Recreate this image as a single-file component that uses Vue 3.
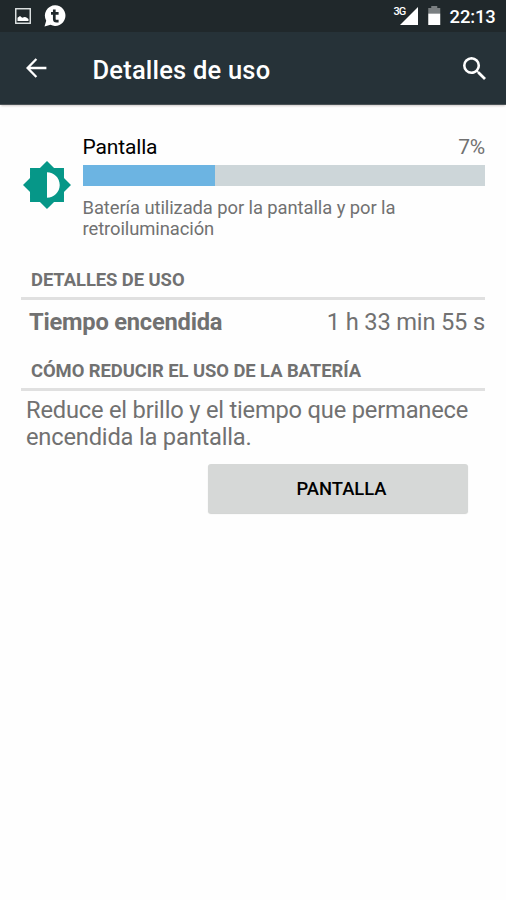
<script setup>
const usage = {
  name: 'Pantalla',
  percent: '7%',
  fill: 33,
  description: 'Batería utilizada por la pantalla y por la retroiluminación',
}
</script>

<template>
  <div class="screen">
    <div class="status">
      <div class="group">
        <svg class="picture" viewBox="0 0 16 16">
          <rect x="0.75" y="0.75" width="14.5" height="14.5" fill="none" stroke="#e4e8e9" stroke-width="1.4" />
          <path d="M2.5 13V9.8L5 8l2.2 1.8L9.5 9l1.5.3L13.5 11v2z" fill="#fff" />
        </svg>
        <svg class="chat" viewBox="0 0 22 22">
          <path d="M11.2.3a10.3 10.3 0 1 1-4.7 19.5L.5 21.6l1.7-5.9A10.3 10.3 0 0 1 11.2.3z" fill="#fff" />
          <path d="M10.3 4.4v9.6q0 2.2 2.2 2.2h2.1M7 8.4h7.6" fill="none" stroke="#20292c" stroke-width="2.7" />
        </svg>
      </div>
      <div class="group">
        <span class="network">3G</span>
        <svg class="signal" viewBox="0 0 18 18"><path d="M18 0v18H0z" fill="#fff" /></svg>
        <svg class="battery" viewBox="0 0 12 19">
          <path d="M3 0h6v2h3v5.5H0V2h3z" fill="#7a7f81" />
          <path d="M0 7.5h12V19H0z" fill="#fff" />
        </svg>
        <span class="clock">22:13</span>
      </div>
    </div>

    <header class="bar">
      <svg class="back" viewBox="0 0 21 20">
        <path d="M20.4 10H1.8M10.4 1L1.6 10l8.8 9" fill="none" stroke="#fff" stroke-width="2.3" />
      </svg>
      <h1>Detalles de uso</h1>
      <svg class="search" viewBox="3 3 17.5 17.5">
        <path d="M15.5 14h-.79l-.28-.27A6.47 6.47 0 0 0 16 9.5 6.5 6.5 0 1 0 9.5 16c1.61 0 3.09-.59 4.23-1.57l.27.28v.79l5 4.99L20.49 19l-4.99-5zm-6 0C7.01 14 5 11.99 5 9.5S7.01 5 9.5 5 14 7.01 14 9.5 11.99 14 9.5 14z" fill="#fff" />
      </svg>
    </header>

    <main>
      <section class="summary">
        <svg class="brightness" viewBox="0.69 0.69 22.62 22.62">
          <path d="M20 15.31L23.31 12 20 8.69V4h-4.69L12 .69 8.69 4H4v4.69L.69 12 4 15.31V20h4.69L12 23.31 15.31 20H20v-4.69zM12 18V6c3.31 0 6 2.69 6 6s-2.69 6-6 6z" fill="#069788" />
        </svg>
        <div class="info">
          <div class="heading">
            <span class="name">{{ usage.name }}</span>
            <span class="percent">{{ usage.percent }}</span>
          </div>
          <div class="track"><div class="fill" :style="{ width: usage.fill + '%' }"></div></div>
          <p class="description">{{ usage.description }}</p>
        </div>
      </section>

      <h2>DETALLES DE USO</h2>
      <div class="row">
        <span class="label">Tiempo encendida</span>
        <span class="value">1 h 33 min 55 s</span>
      </div>

      <h2>CÓMO REDUCIR EL USO DE LA BATERÍA</h2>
      <p class="tip">Reduce el brillo y el tiempo que permanece encendida la pantalla.</p>
      <button type="button">PANTALLA</button>
    </main>
  </div>
</template>

<style>
body {
  background: #fefefe;
}
</style>

<style scoped>
.screen {
  box-sizing: border-box;
  width: 506px;
  height: 900px;
  overflow: hidden;
  background: #fefefe;
  color: #717171;
  font-family: Roboto, sans-serif;
}
h1,
h2,
p {
  margin: 0;
}
svg {
  display: block;
  flex: none;
}
.status {
  display: flex;
  justify-content: space-between;
  box-sizing: border-box;
  height: 32px;
  padding: 0 10.5px 0 15px;
  background: #20282b;
  color: #fff;
}
.group {
  display: flex;
  align-items: flex-start;
}
.picture {
  width: 16px;
  height: 16px;
  margin-top: 8px;
}
.chat {
  width: 22px;
  height: 22px;
  margin: 5px 0 0 12.5px;
}
.network {
  margin: 5px -6px 0 0;
  font-size: 11px;
  line-height: 13px;
  font-weight: 500;
  letter-spacing: -0.8px;
}
.signal {
  width: 18px;
  height: 18px;
  margin-top: 7px;
}
.battery {
  width: 12.5px;
  height: 19px;
  margin: 6px 9px 0 10.5px;
}
.clock {
  margin-top: 6px;
  font-size: 18.4px;
  line-height: 22px;
  font-weight: 500;
  letter-spacing: -0.15px;
}
.bar {
  display: flex;
  align-items: flex-start;
  box-sizing: border-box;
  height: 72px;
  padding: 0 20px 0 26px;
  background: #263238;
  color: #fff;
  box-shadow: 0 1px 0 #4a5256, 0 3px 2px -1px #cfc9c9;
}
.back {
  width: 21px;
  height: 20px;
  margin-top: 26px;
}
h1 {
  flex: 1;
  padding: 23px 0 0 45.5px;
  font-size: 25.5px;
  line-height: 30px;
  font-weight: 500;
  letter-spacing: 0.2px;
}
.search {
  width: 23px;
  height: 23px;
  margin-top: 25px;
}
main {
  padding: 31px 21px 0 21px;
}
.summary {
  display: flex;
  height: 134px;
}
.brightness {
  width: 48px;
  height: 48px;
  margin: 25.5px 12px 0 1.5px;
}
.info {
  flex: 1;
}
.heading {
  display: flex;
  justify-content: space-between;
  font-size: 21px;
  line-height: 25px;
}
.name {
  color: #000;
  letter-spacing: -0.15px;
}
.percent {
  letter-spacing: -0.2px;
}
.track {
  height: 20.5px;
  margin-top: 5px;
  background: #cdd6d9;
}
.fill {
  height: 100%;
  background: #6cb4e2;
}
.description {
  padding-top: 11px;
  font-size: 18.4px;
  line-height: 21.6px;
  letter-spacing: -0.08px;
}
h2 {
  padding: 0 10px 6px;
  border-bottom: 3px solid #e0e0e0;
  font-size: 18.4px;
  line-height: 22px;
  font-weight: 700;
  letter-spacing: -0.06px;
}
.row {
  display: flex;
  justify-content: space-between;
  height: 52.5px;
  padding: 7.5px 0 0 8px;
  font-size: 23.7px;
  line-height: 28px;
}
.label {
  font-weight: 700;
  letter-spacing: -0.23px;
}
.value {
  letter-spacing: -0.18px;
}
.tip {
  padding: 6px 0 0 5px;
  font-size: 23.7px;
  line-height: 27px;
  letter-spacing: -0.2px;
}
button {
  display: block;
  width: 260px;
  height: 49px;
  margin: 13px 0 0 187px;
  padding: 0 0 0 7px;
  border: 0;
  border-radius: 3px;
  background: #d6d8d7;
  box-shadow: 0 1px 1px #d0d2d1;
  color: #000;
  font-family: inherit;
  font-size: 18.4px;
  font-weight: 500;
}
</style>
